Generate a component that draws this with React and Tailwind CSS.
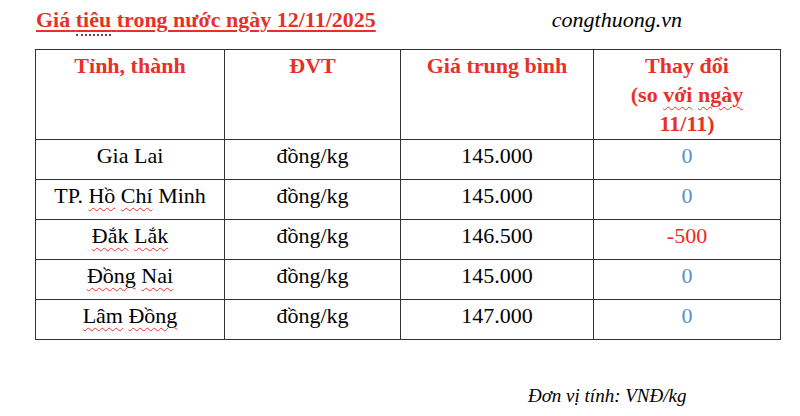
import React from "react";

const rows = [
  { name: "Gia Lai", unit: "đồng/kg", price: "145.000", change: "0" },
  { name: "TP. Hồ Chí Minh", unit: "đồng/kg", price: "145.000", change: "0", wavy: ["Hồ", "Chí"] },
  { name: "Đắk Lắk", unit: "đồng/kg", price: "146.500", change: "-500", wavy: ["Đắk", "Lắk"] },
  { name: "Đồng Nai", unit: "đồng/kg", price: "145.000", change: "0", wavy: ["Đồng", "Nai"] },
  { name: "Lâm Đồng", unit: "đồng/kg", price: "147.000", change: "0", wavy: ["Lâm", "Đồng"] },
];

// gạch chân kiểu lỗi chính tả của Word
function Squiggle({ text, words = [] }) {
  const parts = text.split(" ");
  return parts.map((w, i) => (
    <React.Fragment key={i}>
      {i > 0 && " "}
      {words.includes(w) ? (
        <span className="underline decoration-wavy decoration-[#e33] decoration-1 underline-offset-[4px]">
          {w}
        </span>
      ) : (
        w
      )}
    </React.Fragment>
  ));
}

export default function App() {
  const cell = "border border-[#333] align-top text-center px-1 pt-[1px]";
  return (
    <div className="w-[800px] h-[416px] bg-white overflow-hidden text-black font-['Liberation_Serif','Times_New_Roman',serif]">
      <div className="flex items-start pt-[5px] h-[49px]">
        <div className="ml-[36px] text-[22px] leading-[29px] font-bold text-[#e8302a] underline decoration-2 underline-offset-[3px]">
          Giá{" "}
          <span className="relative">
            tiêu
            <span className="absolute left-0 right-0 top-[27px] border-b-2 border-dotted border-[#8a3a3a]" />
          </span>{" "}
          trong nước ngày 12/11/2025
        </div>
        <div className="ml-[176px] text-[22px] leading-[29px] italic">congthuong.vn</div>
      </div>

      <table className="ml-[35px] border-collapse text-[22px] leading-[29px]">
        <colgroup>
          <col className="w-[189px]" />
          <col className="w-[176px]" />
          <col className="w-[193px]" />
          <col className="w-[187px]" />
        </colgroup>
        <thead>
          <tr className="h-[90px] font-bold text-[#e8302a]">
            <th className={cell}>Tỉnh, thành</th>
            <th className={cell}>ĐVT</th>
            <th className={cell}>Giá trung bình</th>
            <th className={cell}>
              Thay đổi
              <br />
              (so <Squiggle text="với ngày" words={["với", "ngày"]} />
              <br />
              11/11)
            </th>
          </tr>
        </thead>
        <tbody>
          {rows.map((r) => (
            <tr key={r.name} className="h-[40px]">
              <td className={cell}>
                <Squiggle text={r.name} words={r.wavy} />
              </td>
              <td className={cell}>{r.unit}</td>
              <td className={cell}>{r.price}</td>
              <td className={`${cell} ${r.change === "0" ? "text-[#5b8fd6]" : "text-[#f0281e]"}`}>
                {r.change}
              </td>
            </tr>
          ))}
        </tbody>
      </table>

      <div className="ml-[528px] mt-[44px] text-[19px] leading-[24px] italic">Đơn vị tính: VNĐ/kg</div>
    </div>
  );
}
